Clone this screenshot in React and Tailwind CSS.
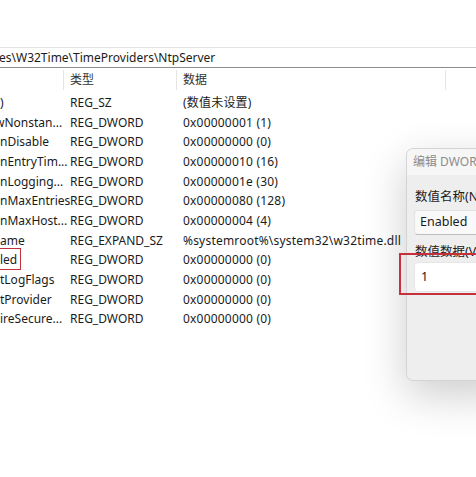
import React from 'react';

const rows = [
  [')', 'REG_SZ', '(数值未设置)'],
  ['wNonstan...', 'REG_DWORD', '0x00000001 (1)'],
  ['nDisable', 'REG_DWORD', '0x00000000 (0)'],
  ['nEntryTim...', 'REG_DWORD', '0x00000010 (16)'],
  ['nLogging...', 'REG_DWORD', '0x0000001e (30)'],
  ['nMaxEntries', 'REG_DWORD', '0x00000080 (128)'],
  ['nMaxHost...', 'REG_DWORD', '0x00000004 (4)'],
  ['ame', 'REG_EXPAND_SZ', '%systemroot%\\system32\\w32time.dll'],
  ['led', 'REG_DWORD', '0x00000000 (0)'],
  ['tLogFlags', 'REG_DWORD', '0x00000000 (0)'],
  ['tProvider', 'REG_DWORD', '0x00000000 (0)'],
  ['ireSecure...', 'REG_DWORD', '0x00000000 (0)'],
];

function App() {
  return (
    <div
      className="relative w-[476px] h-[477px] overflow-hidden bg-white text-[#1b1b1b]"
      style={{ fontFamily: '"Noto Sans", "Noto Sans CJK SC", sans-serif' }}
    >
      <div className="h-[47px]" />

      {/* Address bar */}
      <div className="h-[21px] border-t border-[#e3e3e3] border-b border-b-[#8c8c8c] flex items-center pt-[1px] text-[12px] leading-none whitespace-nowrap">
        <span className="-ml-[1px]">es\W32Time\TimeProviders\NtpServer</span>
      </div>

      {/* Column headers */}
      <div className="h-[24px] flex items-stretch text-[12px] text-[#333] whitespace-nowrap">
        <div className="w-[64px] border-r border-[#e5e5e5] my-[2px]" />
        <div className="w-[113px] pl-[6px] border-r border-[#e5e5e5] my-[2px] flex items-center">类型</div>
        <div className="w-[269px] pl-[6px] border-r border-[#e5e5e5] my-[2px] flex items-center">数据</div>
      </div>

      {/* Values */}
      <div className="flex flex-col pt-[1px] text-[12px] whitespace-nowrap">
        {rows.map((r, i) => (
          <div key={i} className="h-[19.7px] flex items-center">
            <div className="w-[70px] overflow-hidden">
              <span className={i === 1 ? '-ml-[5px] inline-block' : ''}>{r[0]}</span>
            </div>
            <div className="w-[113px]">{r[1]}</div>
            <div className="tracking-[0.2px]">{r[2]}</div>
          </div>
        ))}
      </div>

      {/* red mark on Enabled */}
      <div className="absolute left-[-2px] top-[248px] w-[23px] h-[22px] border-[1.5px] border-[#c5303c]" />

      {/* Edit DWORD dialog */}
      <div className="absolute left-[406px] top-[148px] w-[110px] h-[233px] rounded-[7px] border border-[#d4d4d4] bg-[#eeeeee] shadow-[0_14px_44px_rgba(0,0,0,0.2)] overflow-hidden whitespace-nowrap">
        <div className="h-[26px] bg-[#f6f6f6] flex items-center pl-[6px] text-[12px] text-[#8c8c8c]">
          编辑 DWORD (32 位)值
        </div>
        <div className="pl-[8px] pt-[16px] text-[12.5px]">
          <div className="leading-none">数值名称(N):</div>
          <div className="mt-[6px] ml-[-1px] h-[25px] rounded-l-[4px] bg-[#f9f9f9] border border-[#e2e2e2] border-b-[#bdbdbd] flex items-center pl-[5px]">
            Enabled
          </div>
          <div className="mt-[11px] leading-none">数值数据(V):</div>
          <div className="mt-[4px] ml-[-1px] h-[30px] rounded-l-[4px] bg-white border border-[#e6e6e6] flex items-center pl-[6px]">
            1
          </div>
        </div>
      </div>

      {/* red mark on value data */}
      <div className="absolute left-[399px] top-[253px] w-[90px] h-[42px] border-2 border-[#c5303c]" />
    </div>
  );
}

export default App;
